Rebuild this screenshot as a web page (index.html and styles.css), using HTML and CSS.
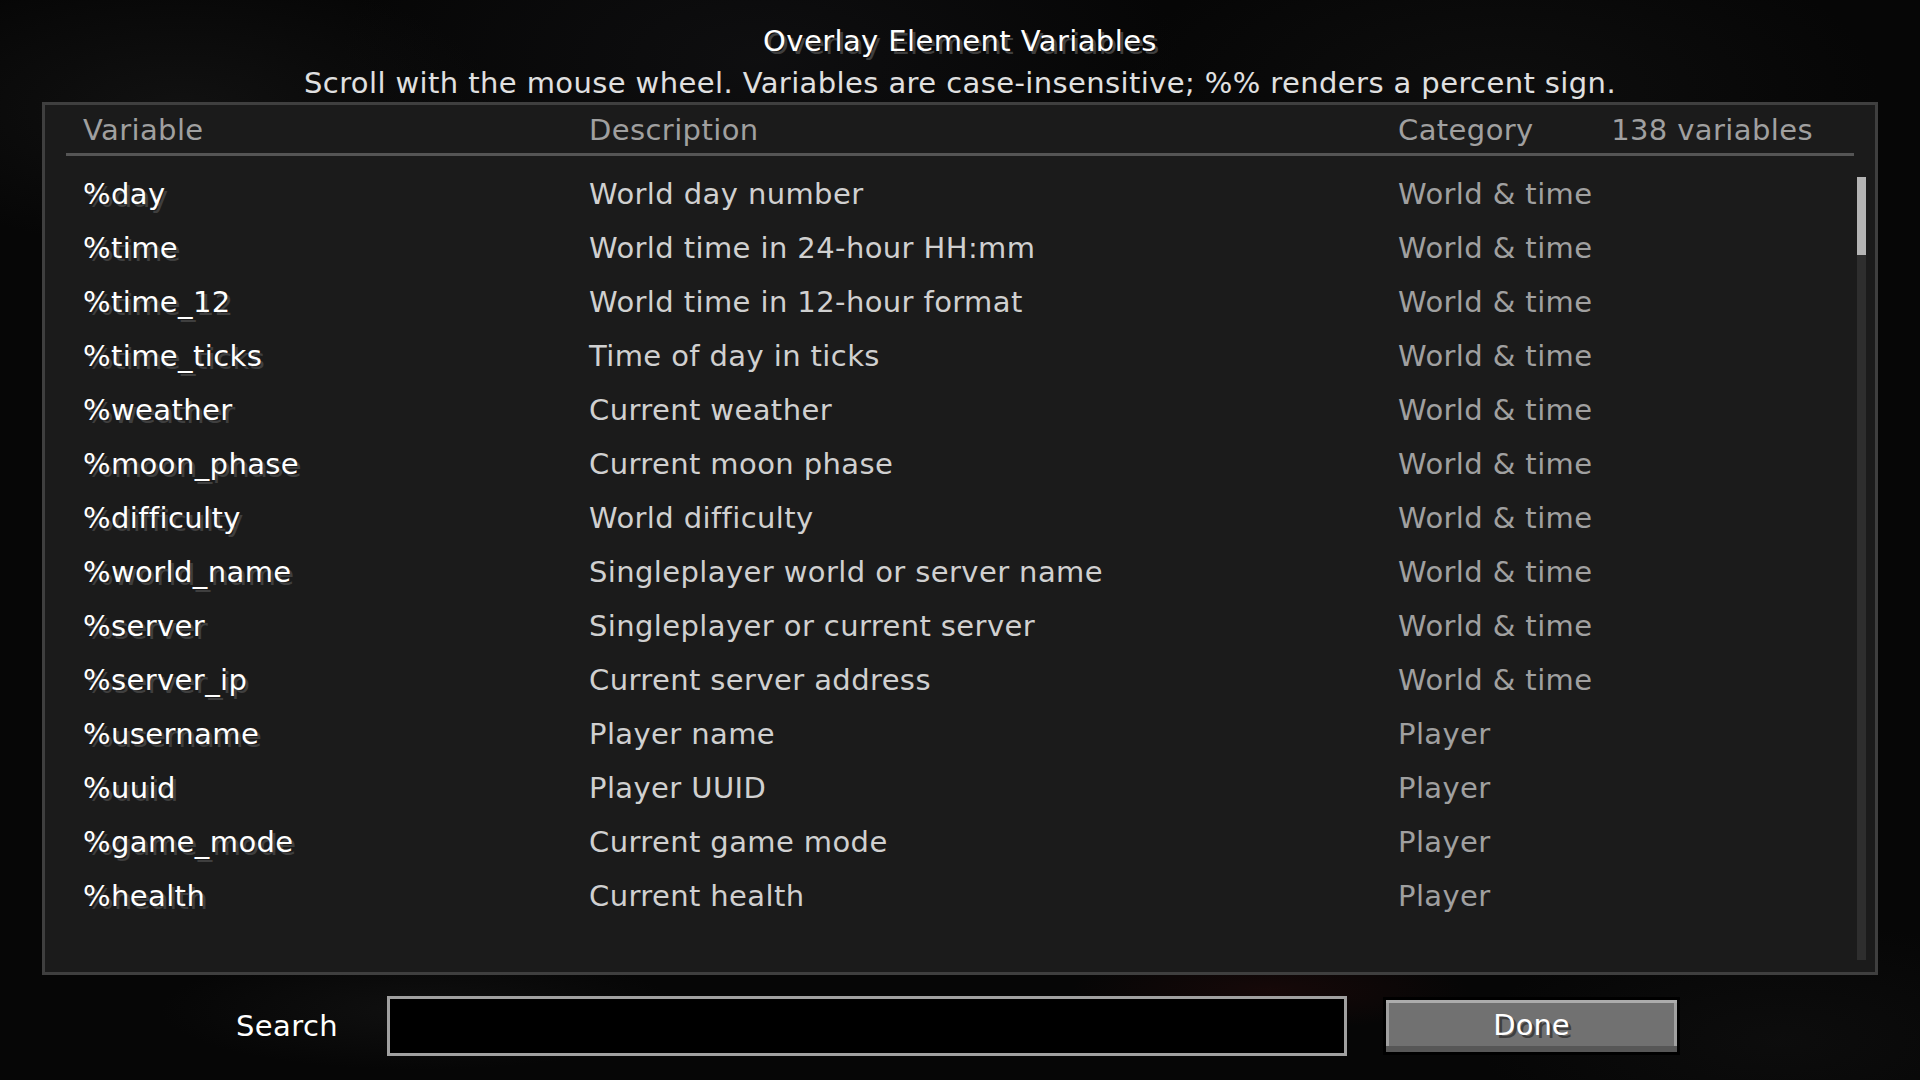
FILE: index.html
```html
<!DOCTYPE html>
<html lang="en">
<head>
    <meta charset="UTF-8">
    <meta name="viewport" content="width=device-width, initial-scale=1.0">
    <title>Overlay Element Variables</title>
    <link rel="stylesheet" href="styles.css">
</head>
<body>
    <div class="screen">
        <div class="heading">
            <div class="title">Overlay Element Variables</div>
            <div class="subtitle">Scroll with the mouse wheel. Variables are case-insensitive; %% renders a percent sign.</div>
        </div>

        <div class="panel">
            <div class="table-head">
                <span>Variable</span>
                <span>Description</span>
                <span>Category</span>
                <span class="count">138 variables</span>
            </div>
            <div class="rule"></div>

            <div class="list-body">
                <div class="rows">
                    <div class="row"><span class="var">%day</span><span class="desc">World day number</span><span class="cat">World &amp; time</span></div>
                    <div class="row"><span class="var">%time</span><span class="desc">World time in 24-hour HH:mm</span><span class="cat">World &amp; time</span></div>
                    <div class="row"><span class="var">%time_12</span><span class="desc">World time in 12-hour format</span><span class="cat">World &amp; time</span></div>
                    <div class="row"><span class="var">%time_ticks</span><span class="desc">Time of day in ticks</span><span class="cat">World &amp; time</span></div>
                    <div class="row"><span class="var">%weather</span><span class="desc">Current weather</span><span class="cat">World &amp; time</span></div>
                    <div class="row"><span class="var">%moon_phase</span><span class="desc">Current moon phase</span><span class="cat">World &amp; time</span></div>
                    <div class="row"><span class="var">%difficulty</span><span class="desc">World difficulty</span><span class="cat">World &amp; time</span></div>
                    <div class="row"><span class="var">%world_name</span><span class="desc">Singleplayer world or server name</span><span class="cat">World &amp; time</span></div>
                    <div class="row"><span class="var">%server</span><span class="desc">Singleplayer or current server</span><span class="cat">World &amp; time</span></div>
                    <div class="row"><span class="var">%server_ip</span><span class="desc">Current server address</span><span class="cat">World &amp; time</span></div>
                    <div class="row"><span class="var">%username</span><span class="desc">Player name</span><span class="cat">Player</span></div>
                    <div class="row"><span class="var">%uuid</span><span class="desc">Player UUID</span><span class="cat">Player</span></div>
                    <div class="row"><span class="var">%game_mode</span><span class="desc">Current game mode</span><span class="cat">Player</span></div>
                    <div class="row"><span class="var">%health</span><span class="desc">Current health</span><span class="cat">Player</span></div>
                </div>
                <div class="scrollbar">
                    <div class="thumb"></div>
                </div>
            </div>
        </div>

        <div class="search-bar">
            <label class="search-label" for="search">Search</label>
            <input class="search-box" type="text" id="search">
            <button class="done">Done</button>
        </div>
    </div>
</body>
</html>
```

FILE: styles.css
```css
body {
    margin: 0;
    width: 1920px;
    height: 1080px;
    overflow: hidden;
    font-family: "DejaVu Sans", "Noto Sans", sans-serif;
    font-size: 29px;
    letter-spacing: 0.4px;
    color: #ffffff;
    background-color: #060606;
    background-image:
        radial-gradient(ellipse 320px 140px at 180px 110px, rgba(38,38,38,0.35), transparent),
        radial-gradient(ellipse 420px 200px at 760px 60px, rgba(30,30,34,0.35), transparent),
        radial-gradient(ellipse 380px 160px at 1500px 90px, rgba(32,32,32,0.3), transparent),
        radial-gradient(ellipse 260px 60px at 420px 1010px, rgba(34,34,34,0.35), transparent),
        radial-gradient(ellipse 200px 40px at 1270px 990px, rgba(60,14,14,0.3), transparent),
        radial-gradient(ellipse 300px 120px at 1780px 1040px, rgba(28,28,28,0.3), transparent);
}
.screen {
    display: flex;
    flex-direction: column;
    height: 100%;
}
.heading {
    padding-top: 26px;
    text-align: center;
}
.title {
    line-height: 30px;
    text-shadow: 3px 3px 0 #3f3f3f;
}
.subtitle {
    margin-top: 12px;
    line-height: 30px;
    color: #e0e0e0;
}
.panel {
    margin: 4px 42px 0;
    height: 873px;
    box-sizing: border-box;
    border: 3px solid #3f3f3f;
    background-color: #1b1b1b;
    display: flex;
    flex-direction: column;
}
.table-head {
    display: grid;
    grid-template-columns: 506px 809px 1fr auto;
    padding: 10px 62px 0 38px;
    line-height: 30px;
    color: #a0a0a0;
}
.rule {
    height: 3px;
    margin: 8px 21px 0;
    background-color: #555555;
}
.list-body {
    flex: 1;
    min-height: 0;
    display: flex;
}
.rows {
    flex: 1;
    padding-top: 11px;
    overflow: hidden;
}
.row {
    display: grid;
    grid-template-columns: 506px 809px 1fr;
    padding-left: 38px;
    height: 54px;
    line-height: 54px;
    white-space: nowrap;
}
.var {
    color: #ffffff;
    text-shadow: 3px 3px 0 #3f3f3f;
}
.desc {
    color: #d0d0d0;
}
.cat {
    color: #a0a0a0;
}
.scrollbar {
    width: 9px;
    margin: 21px 9px 12px 0;
    background-color: #2e2e2e;
}
.thumb {
    height: 78px;
    background-color: #b4b4b4;
}
.search-bar {
    display: flex;
    align-items: center;
    height: 102px;
}
.search-label {
    margin-left: 236px;
    width: 151px;
    line-height: 30px;
    color: #ffffff;
}
.search-box {
    width: 960px;
    height: 60px;
    box-sizing: border-box;
    border: 3px solid #a0a0a0;
    background-color: #000000;
    outline: none;
    padding: 0 9px;
    font: inherit;
    color: #e0e0e0;
}
.done {
    margin-left: 36px;
    width: 297px;
    height: 58px;
    box-sizing: border-box;
    border: 3px solid #000000;
    background-color: #717171;
    box-shadow:
        inset 0 -6px 0 #575757,
        inset 0 3px 0 #acacac,
        inset 3px 0 0 #a0a0a0,
        inset -3px 0 0 #a0a0a0;
    font: inherit;
    line-height: 30px;
    padding: 0 0 3px;
    color: #ffffff;
    text-shadow: 3px 3px 0 #3f3f3f;
}
```
